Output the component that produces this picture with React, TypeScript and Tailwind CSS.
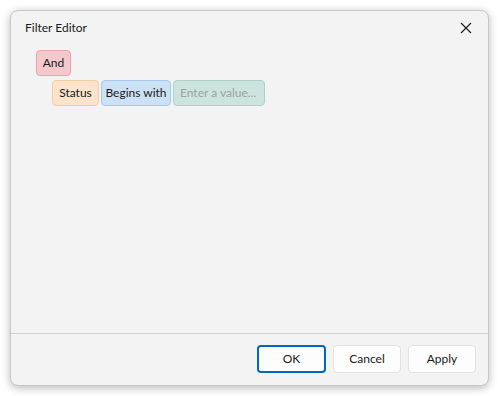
import React from "react";

export default function App() {
  return (
    <div className="w-[499px] h-[396px] bg-white p-[10px]" style={{ fontFamily: 'Lato, "Noto Sans", sans-serif' }}>
      <div className="w-[479px] h-[376px] bg-[#f3f3f3] rounded-[8px] border border-[#c8c8c8] shadow-[0_2px_8px_rgba(0,0,0,0.28)] flex flex-col overflow-hidden">
        <div className="h-[31px] flex items-center justify-between pl-[14px] pr-[16px] pt-[2px]">
          <span className="text-[12px] text-[#1a1a1a]">Filter Editor</span>
          <svg width="12" height="12" viewBox="0 0 12 12" className="mt-[1px]">
            <path d="M1 1 L11 11 M11 1 L1 11" stroke="#1a1a1a" strokeWidth="1.1" />
          </svg>
        </div>
        <div className="flex-1 pl-[25px] pt-[8px]">
          <div className="flex">
            <div className="h-[26px] w-[35px] justify-center flex items-center whitespace-nowrap rounded-[4px] bg-[#f4c8cd] border border-[#eba3ab] text-[12px] text-[#1a1a1a]">And</div>
          </div>
          <div className="flex gap-[2px] mt-[4px] ml-[16px]">
            <div className="h-[26px] w-[47px] justify-center flex items-center whitespace-nowrap rounded-[4px] bg-[#fbe4cb] border border-[#f5cc9f] text-[12px] text-[#1a1a1a]">Status</div>
            <div className="h-[26px] w-[70px] justify-center flex items-center whitespace-nowrap rounded-[4px] bg-[#cde1f4] border border-[#a3caee] text-[12px] text-[#1a1a1a]">Begins with</div>
            <div className="h-[26px] w-[92px] px-[6px] flex items-center whitespace-nowrap rounded-[4px] bg-[#cde4de] border border-[#a9d4c7] text-[12px] text-[#9aa3a0]">Enter a value...</div>
          </div>
        </div>
        <div className="h-[52px] border-t border-[#d2d2d2] flex items-start justify-end gap-[7px] pt-[11px] pr-[12px]">
          <button className="w-[69px] h-[28px] rounded-[4px] border-2 border-[#0067c0] bg-[#fdfdfd] text-[12px] text-[#1a1a1a]">OK</button>
          <button className="w-[68px] h-[28px] rounded-[4px] border border-[#e2e2e2] bg-[#fdfdfd] text-[12px] text-[#1a1a1a]">Cancel</button>
          <button className="w-[68px] h-[28px] rounded-[4px] border border-[#e2e2e2] bg-[#fdfdfd] text-[12px] text-[#1a1a1a]">Apply</button>
        </div>
      </div>
    </div>
  );
}
